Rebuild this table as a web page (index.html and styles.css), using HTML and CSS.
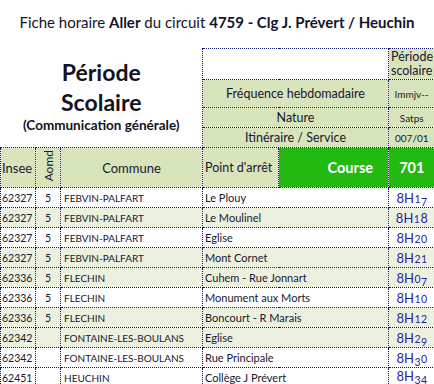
FILE: index.html
```html
<!DOCTYPE html>
<html lang="fr">
<head>
<meta charset="utf-8">
<title>Fiche horaire</title>
<link rel="stylesheet" href="styles.css">
</head>
<body>
<div class="title">Fiche horaire <b>Aller</b> du circuit <b>4759 - Clg J. Prévert / Heuchin</b></div>
<table class="sheet">
  <colgroup>
    <col class="c-insee"><col class="c-aomd"><col class="c-commune"><col class="c-arret"><col class="c-course"><col class="c-num">
  </colgroup>
  <tbody>
    <tr class="r-period">
      <td class="periode" colspan="3" rowspan="4">
        <div class="periode-big">Période</div>
        <div class="periode-big">Scolaire</div>
        <div class="periode-small">(Communication générale)</div>
      </td>
      <td class="blank" colspan="2"></td>
      <td class="hval per"><div class="clip">Période scolaire</div></td>
    </tr>
    <tr class="r-freq">
      <td class="hlabel" colspan="2">Fréquence hebdomadaire</td>
      <td class="hval">lmmjv--</td>
    </tr>
    <tr class="r-small">
      <td class="hlabel" colspan="2">Nature</td>
      <td class="hval">Satps</td>
    </tr>
    <tr class="r-small">
      <td class="hlabel" colspan="2">Itinéraire / Service</td>
      <td class="hval">007/01</td>
    </tr>
    <tr class="r-head">
      <td class="th th-insee">Insee</td>
      <td class="th th-aomd"><span class="vert">Aomd</span></td>
      <td class="th th-commune">Commune</td>
      <td class="th th-arret">Point d'arrêt</td>
      <td class="course">Course</td>
      <td class="course-num">701</td>
    </tr>
    <tr class="row"><td class="insee">62327</td><td class="aomd">5</td><td class="commune">FEBVIN-PALFART</td><td class="arret" colspan="2">Le Plouy</td><td class="time">8H<span class="os">1</span><span class="os dn">7</span></td></tr>
    <tr class="row alt"><td class="insee">62327</td><td class="aomd">5</td><td class="commune">FEBVIN-PALFART</td><td class="arret" colspan="2">Le Moulinel</td><td class="time">8H<span class="os">1</span><span class="os up">8</span></td></tr>
    <tr class="row"><td class="insee">62327</td><td class="aomd">5</td><td class="commune">FEBVIN-PALFART</td><td class="arret" colspan="2">Eglise</td><td class="time">8H<span class="os">2</span><span class="os">0</span></td></tr>
    <tr class="row alt"><td class="insee">62327</td><td class="aomd">5</td><td class="commune">FEBVIN-PALFART</td><td class="arret" colspan="2">Mont Cornet</td><td class="time">8H<span class="os">2</span><span class="os">1</span></td></tr>
    <tr class="row alt"><td class="insee">62336</td><td class="aomd">5</td><td class="commune">FLECHIN</td><td class="arret" colspan="2">Cuhem - Rue Jonnart</td><td class="time">8H<span class="os">0</span><span class="os dn">7</span></td></tr>
    <tr class="row"><td class="insee">62336</td><td class="aomd">5</td><td class="commune">FLECHIN</td><td class="arret" colspan="2">Monument aux Morts</td><td class="time">8H<span class="os">1</span><span class="os">0</span></td></tr>
    <tr class="row alt"><td class="insee">62336</td><td class="aomd">5</td><td class="commune">FLECHIN</td><td class="arret" colspan="2">Boncourt - R Marais</td><td class="time">8H<span class="os">1</span><span class="os">2</span></td></tr>
    <tr class="row alt"><td class="insee">62342</td><td class="aomd"></td><td class="commune">FONTAINE-LES-BOULANS</td><td class="arret" colspan="2">Eglise</td><td class="time">8H<span class="os">2</span><span class="os dn">9</span></td></tr>
    <tr class="row"><td class="insee">62342</td><td class="aomd"></td><td class="commune">FONTAINE-LES-BOULANS</td><td class="arret" colspan="2">Rue Principale</td><td class="time">8H<span class="os dn">3</span><span class="os">0</span></td></tr>
    <tr class="row"><td class="insee">62451</td><td class="aomd"></td><td class="commune">HEUCHIN</td><td class="arret" colspan="2">Collège J Prévert</td><td class="time last"><span class="ul">8H<span class="os dn">3</span><span class="os dn">4</span></span></td></tr>
  </tbody>
</table>
</body>
</html>
```
FILE: styles.css
```css
html, body {
  margin: 0;
  padding: 0;
  background: #ffffff;
}
body {
  width: 434px;
  height: 384px;
  overflow: hidden;
  font-family: Lato, "Noto Sans", sans-serif;
  color: #181830;
}
.title {
  height: 48px;
  box-sizing: border-box;
  padding-top: 12px;
  line-height: 20px;
  font-size: 15px;
  text-align: center;
  color: #141428;
}
.sheet {
  border-collapse: collapse;
  table-layout: fixed;
  width: 434px;
}
.c-insee { width: 35px; }
.c-aomd { width: 25px; }
.c-commune { width: 142px; }
.c-arret { width: 76px; }
.c-course { width: 110px; }
.c-num { width: 46px; }
.sheet td {
  padding: 0;
  border: 1px dotted #10107a;
  overflow: hidden;
  white-space: nowrap;
}
.sheet tr > td:last-child { border-right: none; }
.r-period { height: 30px; }
.r-freq { height: 28px; }
.r-small { height: 20px; }
.r-head { height: 40px; }
.row { height: 20px; }

.periode {
  border-left: none !important;
  border-top: none !important;
  background: #ffffff;
  text-align: center;
  vertical-align: top;
  padding-top: 8px !important;
  font-weight: 700;
  color: #121222;
}
.periode-big { font-size: 23px; line-height: 30px; }
.periode-small { font-size: 13.5px; line-height: 17px; margin-top: 0; }
.blank { background: #ffffff; }
.hlabel {
  background: #d8e4bc;
  text-align: center;
  font-size: 12.5px;
}
.hval {
  background: #d8e4bc;
  text-align: center;
  font-size: 10px;
}
.hval.per {
  text-align: left;
  vertical-align: top;
  font-size: 12.5px;
}
.clip {
  width: 46px;
  white-space: normal;
  overflow: hidden;
  line-height: 14px;
  padding-left: 2px;
  padding-top: 1px;
  height: 30px;
  box-sizing: border-box;
}
.th {
  background: #d8e4bc;
  font-size: 13px;
  text-align: center;
}
.th-insee { text-align: left; padding-left: 1px !important; }
.th-arret { text-align: left; padding-left: 2px !important; font-size: 12.5px; }
.vert {
  display: inline-block;
  writing-mode: vertical-rl;
  transform: rotate(180deg);
  font-size: 12px;
}
.course {
  background: #22b910;
  color: #ffffff;
  font-weight: 700;
  font-size: 14.5px;
  text-align: right;
  padding-right: 15px !important;
}
.course-num {
  background: #22b910;
  color: #ffffff;
  font-weight: 700;
  font-size: 14.5px;
  text-align: center;
}
.row { background: #ffffff; font-size: 10px; }
.row.alt { background: #ebf1de; }
.insee { padding-left: 1px !important; font-size: 10.5px; }
.aomd { text-align: center; font-size: 10.5px; }
.commune { padding-left: 3px !important; }
.arret { padding-left: 2px !important; font-size: 11px; }
.time {
  text-align: center;
  color: #2a1ea0;
  font-size: 13px;
}
.os {
  font-size: 10.5px;
  display: inline-block;
  margin-left: 0.5px;
}
.os.dn { transform: translateY(2.5px); }
.os.up { font-size: 12.5px; }
.time.last { vertical-align: top; }
.time.last .ul {
  display: inline-block;
  width: 42px;
  border-bottom: 1px solid #2a1ea0;
  line-height: 13px;
  padding-top: 1px;
}
```
